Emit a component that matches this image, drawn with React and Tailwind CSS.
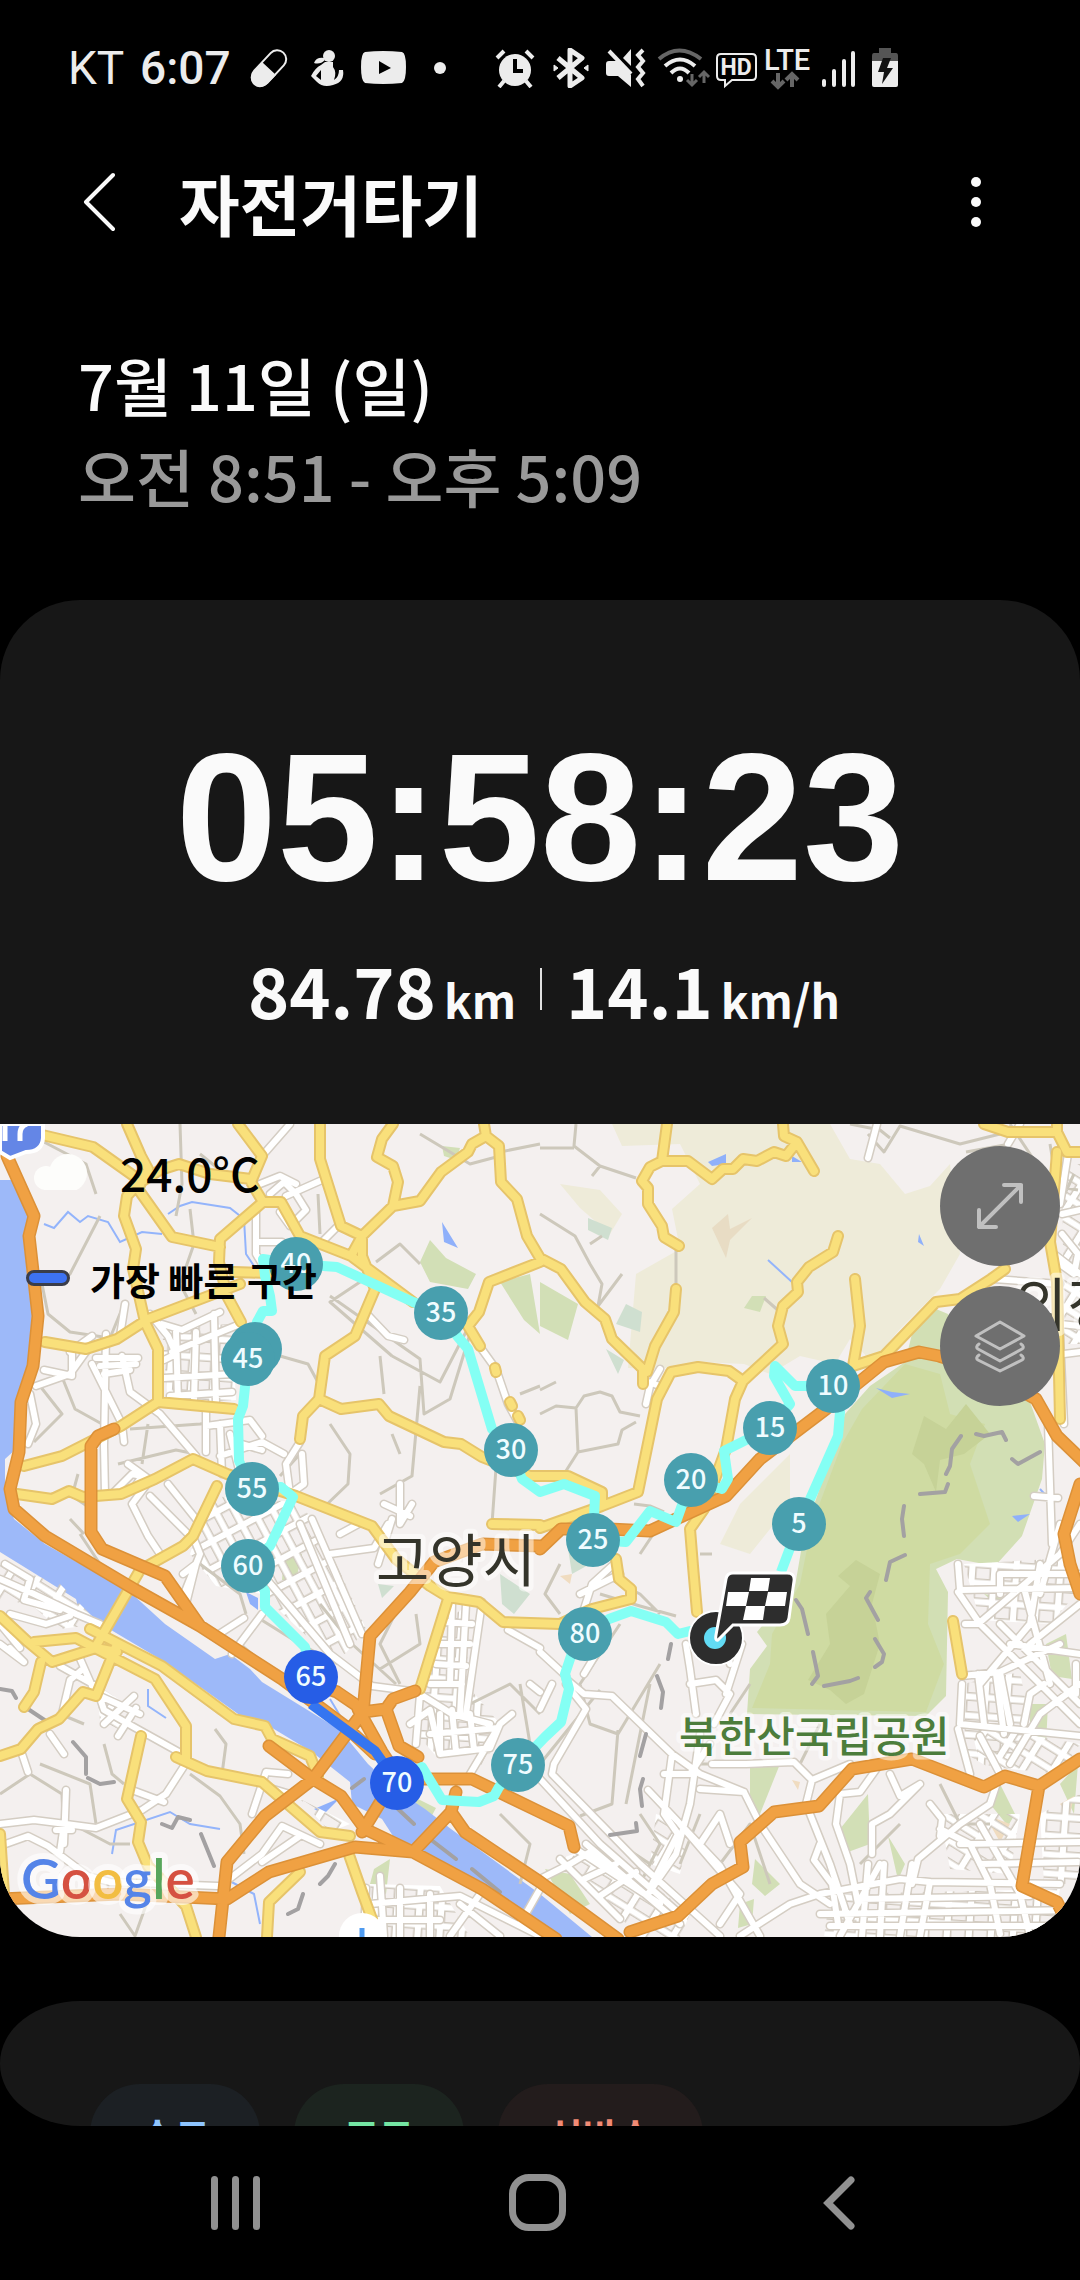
import { useState } from "react";

const LANES = [
  "M44 18L86 40L96 70", "M180 0L182 60L176 92", "M200 30L240 62", "M40 150L48 190L70 208L110 214L124 180",
  "M60 248L75 285L120 310", "M34 318L62 290L40 262", "M100 92L70 150L44 160", "M190 85L194 120L180 160L196 190",
  "M420 10L470 40L500 32", "M500 28L540 20", "M376 138L400 120L420 140", "M392 232L440 258L470 200",
  "M318 70L320 110", "M330 172L420 235L424 290L450 275L470 210", "M372 150L330 178L392 232",
  "M280 232L308 240L320 262", "M330 300L350 330L348 360L322 385", "M420 262L412 352L380 370", "M497 330L492 400",
  "M380 232L384 270", "M392 310L400 330", "M520 270L540 262", "M300 330L280 352", "M130 305L200 300L236 296",
  "M142 340L148 300", "M118 340L176 326L196 330", "M78 350L72 372L90 384", "M576 0L574 22L600 42L636 54",
  "M540 24L574 24", "M600 42L592 52", "M540 90L575 112L590 140L602 160L598 182L622 150", "M590 120L602 112",
  "M676 122L676 165", "M540 290L556 282L576 284L584 272L600 268L612 272L620 288L640 292",
  "M576 284L578 328L618 320L622 306L636 298", "M578 328L564 350", "M540 266L556 258", "M634 380L650 382L664 388",
  "M850 0L880 6L890 14", "M868 10L884 28L900 2L960 20L1000 10", "M966 28L1010 20", "M780 188L764 174",
  "M810 380L836 312", "M560 440L545 470L560 490", "M600 450L640 470L660 490", "M620 500L580 560L590 600L618 610L660 540",
  "M540 640L600 566", "M618 606L612 680L580 692", "M590 690L560 660", "M650 560L626 680",
  "M600 470L640 482L676 492", "M700 430L712 430", "M660 400L640 430",
  "M40 640L90 660L96 700", "M0 670L30 650L62 670L64 720", "M84 600L60 590", "M72 700L110 720L130 720",
  "M104 620L112 650L124 660", "M190 650L220 672L240 700L244 730", "M215 605L226 620L222 650", "M180 560L220 590",
  "M100 440L80 410", "M70 395L84 410", "M200 440L240 470L246 490", "M240 520L264 540", "M320 480L352 520L396 560",
  "M260 495L300 520L338 540", "M400 480L380 520L400 560", "M380 545L420 520L416 490", "M470 580L510 560L540 590",
  "M520 560L530 620", "M500 600L480 640", "M500 690L530 720L520 760", "M120 790L135 812L150 770",
  "M700 640L740 640", "M800 640L820 600", "M750 560L730 590", "M860 740L900 700", "M940 660L960 700L990 700",
  "M640 760L660 720L640 690", "M700 690L680 740", "M720 740L750 700L770 760", "M620 720L650 740",
  "M1050 20L1060 80L1074 50", "M1040 60L1078 66", "M1010 0L1050 60",
];

const STREETS = [
  "M262 32L290 0", "M270 70L284 58L296 70L306 86L290 102L280 88", "M286 72L322 56", "M256 84L256 130L262 140",
  "M256 118L282 118L286 128L320 120L338 102", "M260 60L280 52L296 60", "M367 190L388 212L404 216",
  "M478 220L496 245L508 280L518 298", "M125 180L120 212", "M88 225L70 250L36 262", "M72 226L72 252L44 246",
  "M96 234L138 234M100 242L136 240M104 250L130 246", "M92 240L122 300L124 318", "M122 232L130 268L160 290L196 332",
  "M92 212L70 228", "M106 210L104 322L105 370", "M30 270L36 300L28 320", "M150 190L168 212L176 230L164 236",
  "M162 200L182 206L220 188M172 228L240 200M164 254L234 250M170 272L232 268", "M176 206L178 278M196 208L194 276M214 190L216 280",
  "M206 284L206 328M206 302L250 296L262 312M220 300L222 350M220 332L262 318L284 330", "M112 370L132 350L142 352L134 364",
  "M240 350L230 310M262 326L242 320", "M300 318L286 340L290 370L304 360L302 330",
  "M128 340L150 356L132 380L148 412L160 430", "M150 372L190 412M168 360L200 400", "M183 450L196 440L186 480", "M192 410L200 430L184 470",
  "M216 512L244 494M232 530L262 490", "M240 424L330 530L372 562L418 568", "M300 400L350 520", "M312 395L362 510",
  "M330 430L374 424L388 400M340 410L362 398M392 395L378 440", "M400 360L400 400L412 380M384 380L410 392",
  "M0 455L34 470L76 490L100 500", "M5 440L30 455L24 476L60 486M10 490L46 500L70 492", "M0 520L24 538L10 524M0 500L20 524",
  "M60 542L96 562L104 586L132 602L186 632", "M78 530L92 562M62 590L70 556L84 544", "M100 572L140 590M118 612L136 584M104 600L134 572",
  "M50 610L64 630M22 630L28 648", "M0 700L34 696L66 700L96 704L142 686L166 670L188 636", "M66 666L64 720M56 706L72 706M132 666L164 678",
  "M0 722L28 712L48 722L88 752L110 758L218 762", "M64 700L60 728", "M252 690L266 648L288 650M270 664L290 670",
  "M228 756L262 730L282 702L320 720M262 738L300 712", "M420 570L416 620M420 570L452 590L490 600", "M452 480L450 560M466 480L460 590",
  "M444 498L472 500M440 520L470 520M436 540L466 542M430 560L462 560", "M410 600L430 586L440 630L490 624L500 600L512 590",
  "M440 590L440 628M452 586L456 628M470 590L474 626M430 610L498 604", "M470 650L500 600", "M482 478L466 590", "M508 506L540 524",
  "M530 560L540 568", "M566 555L584 570L612 572L672 630L700 650L744 668L760 700L800 760L830 780",
  "M540 585L552 560M566 560L586 585L554 640L552 650L640 740L720 812", "M540 655L600 720L680 790",
  "M584 550L596 530", "M540 528L566 552", "M686 520L690 545L696 590M690 560L716 556L730 570L714 600M730 540L722 500",
  "M742 520L726 570", "M648 666L720 742L760 812", "M672 630L664 690L678 710L652 760", "M700 610L690 680L676 730L648 770",
  "M712 640L746 640L794 638L812 656L850 640", "M700 665L744 668", "M812 656L806 680L830 740L850 800", "M664 650L690 650L710 620",
  "M880 640L860 668L840 670L836 700L850 740L858 780", "M890 650L900 672L920 660M918 662L890 690L872 700L872 730",
  "M680 700L740 770L720 800M700 720L720 690L730 720", "M820 720L814 736L832 760L838 800",
  "M540 755L570 740L590 728L640 766", "M560 735L620 795M574 724L660 780M586 720L680 800", "M584 755L616 740M600 772L636 748",
  "M740 812L790 780L820 770L900 755L930 758L1060 760", "M840 812L880 740M862 812L868 740M880 812L884 740M900 812L912 740M920 812L930 758",
  "M820 790L1080 786M830 802L1070 802M860 775L1030 772", "M912 760L918 735L960 700L990 680L1000 650",
  "M930 680L942 695L940 712M940 705L970 720L990 760L1000 810", "M980 700L1020 770L1030 812M960 720L1080 718M980 740L1078 738",
  "M958 440L960 466L1080 464M958 468L980 500L1080 600", "M965 500L978 500L1060 430L1080 400",
  "M1000 470L1000 450L1080 450M1024 464L1050 560M1040 440L1030 500L980 560", "M1060 400L1040 470",
  "M962 560L960 600L1080 612M978 550L984 600M996 550L1004 610", "M962 552L1000 548L1060 520M1000 548L1010 600",
  "M958 605L970 650M980 612L1000 650M1010 640L1040 590L1080 560M1024 600L1030 570L1044 560", "M1000 500L1060 560L1080 580",
  "M1030 520L1080 480M1010 520L1080 530", "M1076 540L1076 570", "M1048 300L1052 420M1034 372L1058 374M1058 170L1064 300",
  "M994 155L1060 160M1062 90L1080 86M1054 130L1080 150M1020 0L1008 20M1068 30L1060 80", "M1060 200L1080 202M1064 230L1080 228",
  "M877 0L868 34", "M1062 110L1078 130L1074 150L1060 140", "M614 440L592 460L584 485M580 470L620 450",
  "M660 245L650 262L646 280M648 258L660 262", "M366 764L364 812M380 752L384 812M400 764L400 812M430 770L430 812M370 780L460 772L540 812M374 796L440 796",
  "M540 765L520 800M460 780L500 812M480 770L450 812",
];

const YELLOW = [
  "M38 10L93 23L138 55", "M127 0L141 32L148 45L138 65L172 113L220 123", "M138 60L127 72L124 92L136 125L133 145L145 198L158 225L158 278",
  "M138 60L160 46L179 40L210 50L251 55", "M238 0L262 32L251 58L263 78L220 115L219 138L227 172L241 198",
  "M263 78L281 78L300 112L351 132L362 112", "M320 0L320 35L341 102L362 112L393 82L420 77L441 48L468 28L472 20L486 12L484 0",
  "M486 12L499 22L501 58L517 75L527 112L540 134L561 145L585 178L605 195L612 215L643 245L643 260",
  "M393 0L382 15L377 33L393 42L398 58L393 82", "M351 132L413 178", "M362 115L362 132L375 165L355 212L325 232L319 275L303 292L300 315",
  "M319 275L341 285L379 280L389 292L444 318L461 320L482 333L530 352L568 352L602 368L602 382",
  "M540 138L489 158L479 188L468 202L480 222", "M495 244L496 248M510 278L512 282M518 292L520 296", "M234 148L300 150",
  "M240 160L148 195L117 215L86 225L45 218", "M158 278L121 302L62 332L24 342", "M158 278L234 285",
  "M17 370L52 375L69 367L83 373L121 370L155 355L193 335L227 350L296 372L372 402L396 435L430 462L448 473L479 478L503 498L560 500L592 485L631 475",
  "M217 362L193 412L183 422L140 446L96 522", "M0 492L28 518L52 538L96 524L117 528", "M34 518L76 514L93 523L155 555L186 602L186 635",
  "M90 505L162 542L234 595L265 602L272 615L310 632L318 652", "M41 538L34 568L24 583", "M117 520L96 572L83 568L59 595L38 605L21 625L0 632",
  "M141 612L127 675L141 698L138 718L148 742L186 782L196 813", "M176 633L207 647L262 658L320 708L350 712", "M300 748L269 778L267 813",
  "M348 728L362 768L372 795", "M448 475L420 565", "M492 400L540 401", "M0 710L4 770", "M631 475L631 465L619 455L616 435",
  "M726 325L704 385L690 405L693 442L697 488", "M667 0L662 37L688 37L712 55L723 45L733 45L743 35L757 37L774 28L786 32L797 18L784 12L783 0",
  "M797 18L814 47", "M662 37L650 43L642 57L648 64L648 80L662 102L664 113L679 122", "M676 165L674 188L655 222L647 248",
  "M838 112L833 128L809 143L797 158L798 168L783 182L778 202L783 220L743 257L729 247L698 243L671 248L657 275L638 368L602 382L540 404",
  "M743 257L735 275L726 325", "M855 155L860 202L853 242L884 232L936 178L960 175L991 155L1005 145",
  "M984 0L1008 8L1057 8L1067 28L1080 28", "M1057 28L1050 118L1057 158L1060 295", "M953 497L962 550", "M1057 0L1057 8",
];

const ORANGE = [
  "M7 32L34 92L29 112L38 192L33 242L21 278L19 328L10 365L14 385L45 412L134 465L200 502L282 555L345 602L375 630",
  "M320 562L337 568L362 585", "M114 305L98 312L91 322L91 408L102 425L165 452L200 502",
  "M540 422L482 420L434 438L410 468L370 512L363 588", "M540 425L561 405L609 405L650 407L726 372L760 335L826 285L884 238L919 228L939 232L981 245L1036 275L1057 312L1084 338",
  "M1080 360L1064 410L1070 440L1080 470", "M363 588L313 655L265 692L227 738L219 813", "M269 622L313 655L341 672L365 705L413 728L482 765L556 815",
  "M0 775L120 770L227 775L269 748L355 723L413 728", "M362 708L384 672", "M413 728L451 688L456 668", "M451 688L465 708L540 758L618 815",
  "M363 588L386 585L393 575L415 567", "M386 585L399 622L418 633", "M358 585L382 628L400 655L472 655L540 688L569 702L574 723",
  "M630 808L678 792L712 760L743 743L740 718L774 688L819 682L852 645L912 635L984 663L1005 652L1039 662L1080 635",
  "M1039 662L1022 762L1057 778L1064 792",
];

const ROUTE =
  "M716 512L690 507L678 510L666 498L631 487L609 495L585 510L571 532L565 550L569 565L561 598L545 613L518 641L499 663L494 672L479 678L442 676L422 643L397 659M311 553L305 523L265 483L265 467L248 442L270 422L293 373L281 363L252 365L239 337L238 295L243 282L248 235L257 198L263 187L272 187L270 172L265 152L263 135L296 140L337 143L413 178L441 189L458 213L468 225L492 305L511 326L522 355L540 368L564 360L595 372L593 416L626 418L650 387L676 398L691 356L722 365L728 355L724 327L770 304L790 280L774 252L775 242L795 262L833 262L840 288L838 312L799 400L781 448";

const MARKERS = [
  { km: 80, x: 585, y: 510 },
  { km: 75, x: 518, y: 641 },
  { km: 70, x: 397, y: 659, fast: true },
  { km: 65, x: 311, y: 553, fast: true },
  { km: 60, x: 248, y: 442 },
  { km: 55, x: 252, y: 365 },
  { km: null, x: 255, y: 225 },
  { km: 45, x: 248, y: 235 },
  { km: 40, x: 296, y: 140 },
  { km: 35, x: 441, y: 189 },
  { km: 30, x: 511, y: 326 },
  { km: 25, x: 593, y: 416 },
  { km: 20, x: 691, y: 356 },
  { km: 15, x: 770, y: 304 },
  { km: 10, x: 833, y: 262 },
  { km: 5, x: 799, y: 400 },
];

const CHIPS = [
  { label: "속도", className: "bg-[#1c2024] text-[#8ec5ff]" },
  { label: "고도", className: "bg-[#1c241f] text-[#74e5a3]" },
  { label: "심박수", className: "bg-[#231c1c] text-[#f28b75]" },
];

// Outline first, then the road itself, so junctions stay open
function Roads({ paths, casing, color, width, border }) {
  const d = paths.join("");
  return (
    <g fill="none" strokeLinecap="round" strokeLinejoin="round">
      <path d={d} stroke={casing} strokeWidth={width + border} />
      <path d={d} stroke={color} strokeWidth={width} />
    </g>
  );
}

function StreetPattern({ id, angle, w, h }) {
  const d = `M0 ${h / 2}H${w}M${w / 2} 0V${h}`;
  return (
    <pattern id={id} width={w} height={h} patternUnits="userSpaceOnUse" patternTransform={`rotate(${angle})`}>
      <path d={d} stroke="#cfc8bd" strokeWidth="9" fill="none" />
      <path d={d} stroke="#ffffff" strokeWidth="6" fill="none" />
    </pattern>
  );
}

function RouteMap() {
  return (
    <svg viewBox="0 0 1080 813" className="block h-auto w-full" role="img" aria-label="이동 경로 지도">
      <defs>
        <StreetPattern id="grid-a" angle={62} w={24} h={17} />
        <StreetPattern id="grid-b" angle={4} w={22} h={19} />
        <StreetPattern id="grid-c" angle={32} w={26} h={19} />
      </defs>
      <rect width="1080" height="813" fill="#f4f0ef" />

      {/* Hills and parks */}
      <path fill="#eeebd9" d="M612 0H830L850 35L880 40L905 70L930 62L950 40L960 130L940 165L900 205L872 238L850 215L835 240L800 232L770 250L744 240L700 238L660 245L628 244L636 150L680 125L672 85L700 60L680 20L622 22ZM560 60L600 66L622 90L610 110L580 84ZM790 330L740 380L720 420L750 430L790 380Z" />
      <path fill="#e8dcc4" d="M712 104L728 90L730 105L752 94L730 116L726 134Z" />
      <path fill="#cfdfd0" d="M588 94L612 104L608 116L588 106ZM626 180L642 188L640 208L616 200ZM606 225L624 236L618 250ZM500 450L530 470L514 490L502 480ZM566 412L590 440L572 450ZM378 460L394 462L382 474Z" />
      <path fill="#d2dfb6" d="M540 158L578 180L568 216L540 202ZM430 116L446 134L476 150L468 165L430 158L420 138ZM500 158L530 150L540 210L524 196ZM442 22L460 24L456 36L444 32ZM752 172L766 172L760 188L744 184ZM284 430L302 430L296 456L282 456ZM338 496L346 502L342 512L334 506ZM416 674L436 684L430 695L416 690ZM374 745L390 735L386 770L370 760ZM750 642L780 640L760 690L750 680ZM755 735L780 760L765 772L752 760ZM868 670L870 720L848 728L840 705ZM888 712L905 740L898 756ZM1000 660L1015 690L1008 702L990 680ZM1046 520L1066 510L1072 555L1052 552ZM1030 580L1048 580L1046 620L1030 610ZM1060 660L1078 640L1074 690ZM545 745L570 750L590 780L570 790ZM740 780L754 775L752 800L738 804ZM984 470L1008 474L1000 484Z" />
      <path fill="#f0dcc0" d="M984 690L1010 700L1000 718ZM560 452L572 450L570 460ZM792 656L800 658L798 666ZM1060 680L1074 672L1070 690Z" />
      <path fill="#d2dfb4" d="M936 185L948 190L985 248L1030 278L1045 320L1042 355L1022 412L995 442L957 435L936 445L948 468L946 572L926 592L747 590L750 545L767 522L757 508L795 462L804 410L835 320L845 290L870 262L905 238L912 210Z" />
      <path fill="#cfdba2" d="M905 240L940 250L950 290L985 300L970 340L990 400L960 430L930 440L928 500L944 540L926 588L752 584L770 540L772 510L800 460L812 400L842 320L862 285Z" />
      <path fill="#c6d297" d="M924 292L946 305L966 280L990 310L964 330L940 336L936 368L924 340L912 330ZM856 436L880 450L872 480L880 520L864 570L846 580L830 566L808 556L830 520L826 490L850 462L838 452Z" />

      {/* Water */}
      <path fill="#9db9f9" d="M0 56L16 56L31 100L24 120L32 190L30 240L16 290L16 325L5 335L5 370L14 395L45 420L130 468L165 500L215 535L230 530L250 545L262 558L340 606L368 640L395 665L425 685L451 705L540 770L592 813H554L520 788L427 730L393 712L382 695L352 680L350 658L312 628L269 602L241 592L165 538L79 487L76 475L0 428Z" />
      <path fill="#8fb0fa" d="M442 98L458 124L444 118ZM708 38L726 30L726 40L712 42ZM792 32L802 38L792 38ZM876 264L892 268L910 270L892 274ZM919 110L924 122L918 118ZM246 468L258 474L258 486L250 480ZM1012 392L1030 390L1018 398ZM314 685L340 674L324 690Z" />
      <path fill="none" stroke="#93b4fb" strokeWidth="2" d="M44 100L54 104L68 88L80 98L88 92L108 98L120 118L142 108L162 110M168 90L180 82L192 78L230 84L244 95L246 130L254 142M148 565L148 582L166 594M112 730L116 706L170 688L190 700L220 705M226 755L254 770L260 800M768 136L792 158M1040 365L1048 374M270 736L290 715M330 575L342 595" />

      {/* Built-up blocks */}
      <path fill="url(#grid-a)" d="M210 372L296 378L318 400L366 505L345 530L315 520L262 470L216 462L190 430Z" />
      <path fill="url(#grid-b)" d="M162 204L232 200L236 276L168 280ZM440 500L470 480L466 560L500 600L490 630L436 632L408 600L426 570ZM370 760L440 762L470 813H376Z" />
      <path fill="url(#grid-b)" d="M830 770L1060 765L1050 813H824ZM964 440L1068 434L1076 470L1050 500L980 496ZM962 560L1020 548L1030 600L1000 650L966 630ZM1040 690L1080 670V760H1044Z" />
      <path fill="url(#grid-c)" d="M560 735L600 720L690 790L680 813H640ZM0 440L60 460L100 500L60 505L30 480L0 476ZM96 560L140 590L120 606L100 596ZM970 600L1080 620L1060 650L1010 645L980 640ZM940 690L1020 690L1010 750L950 745Z" />
      <path fill="url(#grid-c)" d="M656 690L690 700L680 750L650 740ZM300 675L350 700L330 708ZM1062 40L1080 40V220H1064Z" />

      <path d={LANES.join("")} fill="none" stroke="#cdc8bb" strokeWidth="3" strokeLinejoin="round" />
      <Roads paths={STREETS} casing="#d4cdc3" color="#ffffff" width={6} border={3} />
      <path
        fill="none"
        stroke="#a3a1a2"
        strokeWidth="4"
        strokeLinecap="round"
        strokeLinejoin="round"
        d="M961 312L952 325L950 342L946 350M976 310L984 312L1002 308L1006 316M1012 335L1018 340L1040 328M920 370L945 368L948 360M904 382L902 395L904 412M905 431L890 438L886 456M870 468L866 474L878 496M875 515L884 530L882 538L875 543M796 476L802 485L808 510M813 528L818 552L812 560M824 562L850 557L858 554M671 520L668 535M657 552L663 568L661 584M646 610L640 632M643 655L640 665L642 682M610 711L637 707L636 699M0 565L12 567L16 574M28 585L46 597M73 618L86 633L86 650M88 654L100 660L114 658M162 700L172 704L178 693L190 696M201 710L214 742M303 770L298 785L288 790M335 740L328 752L320 760M352 664L364 655M398 685L414 700M430 715L456 735M472 745L500 768"
      />
      <Roads paths={YELLOW} casing="#e6c46a" color="#f9e07b" width={8} border={4} />
      <Roads paths={ORANGE} casing="#dc9138" color="#f0a143" width={10} border={3} />

      {/* Road badge cut off by the corner */}
      <path d="M0 0H43V14Q42 28 26 28L10 34L0 28Z" fill="#6486e6" stroke="#ffffff" strokeWidth="4" />
      <path d="M5 0V17M20 17V10Q20 2 27 0" fill="none" stroke="#ffffff" strokeWidth="5" />
      <circle cx="362" cy="812" r="23" fill="#ffffff" />
      <path d="M362 804V813" stroke="#4f9bf0" strokeWidth="5" />

      {/* Place names */}
      <g fontFamily="'Noto Sans CJK KR', sans-serif" paintOrder="stroke" strokeLinejoin="round" stroke="#ffffff" strokeOpacity="0.5">
        <text x="376" y="458" fontSize="58" fill="#34342a" strokeWidth="10">고양시</text>
        <text x="1014" y="202" fontSize="58" fill="#34342a" strokeWidth="10">의정</text>
        <text x="679" y="628" fontSize="42" fontWeight="500" fill="#4c7d3c" strokeWidth="9">북한산국립공원</text>
      </g>

      {/* Ridden track */}
      <g fill="none" strokeLinejoin="round">
        <path d={ROUTE} stroke="#84fff4" strokeWidth="10" />
        <path d="M311 580L375 627L384 640" stroke="#3575f0" strokeWidth="10" />
      </g>
      {MARKERS.map((m) => (
        <g key={`${m.x}-${m.y}`}>
          <circle cx={m.x} cy={m.y} r="27" fill={m.fast ? "#265de6" : "#489fae"} />
          {m.km && (
            <text x={m.x} y={m.y + 9} textAnchor="middle" fontSize="27" fontWeight="500" fontFamily="'Noto Sans CJK KR', sans-serif" fill="#effcff">
              {m.km}
            </text>
          )}
        </g>
      ))}

      {/* Finish flag */}
      <circle cx="716" cy="514" r="27" fill="#2d2d2d" stroke="#ffffff" strokeWidth="2" />
      <circle cx="715" cy="514" r="11" fill="#62dcf5" />
      <path d="M733 449H787Q795 449 794 457L789 494Q788 501 780 501H733L718 516Q715 517 716 511L726 455Q727 449 733 449Z" fill="#2d2d2d" stroke="#ffffff" strokeWidth="3" />
      <path d="M751 454H770L768 467H749ZM728 468H749L746 482H726ZM768 468H787L785 482H765ZM746 482H765L763 496H743Z" fill="#ffffff" />

      <text x="21" y="775" fontSize="55" fontWeight="600" fontFamily="Lato, sans-serif" paintOrder="stroke" stroke="#ffffff" strokeOpacity="0.6" strokeWidth="12" strokeLinejoin="round">
        <tspan fill="#5584e8">G</tspan>
        <tspan fill="#d55141">o</tspan>
        <tspan fill="#f2bd42">o</tspan>
        <tspan fill="#5584e8">g</tspan>
        <tspan fill="#58a65c">l</tspan>
        <tspan fill="#d55141">e</tspan>
      </text>
    </svg>
  );
}

function StatusBar() {
  return (
    <div className="flex h-10 items-center gap-[49px] pl-[68px] text-[#ececec]">
      <div className="flex items-center gap-4">
        <span className="w-14 font-[Roboto] text-[46px] leading-10">KT</span>
        <span className="w-[94px] font-[Roboto] text-[46px] leading-10 font-medium">6:07</span>
        <svg width="45" height="40" viewBox="0 0 45 40" fill="none">
          <rect x="10" y="-1" width="18" height="42" rx="9" transform="rotate(43 19 20)" stroke="currentColor" strokeWidth="2" />
          <path d="M12 14L26 27L16 37Q9 42 3 36Q-2 29 4 23Z" fill="currentColor" />
        </svg>
        <svg width="34" height="40" viewBox="0 0 34 40" fill="currentColor">
          <circle cx="18" cy="8" r="6" />
          <path d="M13 10Q5 9 3 15Q9 17 14 12Z" />
          <path d="M14 14H22V19Q26 24 23 32Q28 29 28 22H32Q34 34 22 37Q12 40 6 34L0 28Q4 20 10 17ZM10 22L5 28L10 32Z" fillRule="evenodd" />
        </svg>
        <svg width="57" height="40" viewBox="0 0 57 40">
          <path d="M4 4Q22 2 41 4Q45 5 45 19Q45 33 41 35Q22 37 4 35Q0 33 0 19Q0 5 4 4Z" fill="currentColor" />
          <path d="M18 13L30 20L18 26Z" fill="#000000" />
        </svg>
        <span className="size-3 rounded-full bg-[#ececec]" />
      </div>

      <div className="flex items-center gap-2">
        <svg width="50" height="40" viewBox="0 0 50 40" fill="none" stroke="currentColor">
          <circle cx="20" cy="22" r="16" fill="currentColor" stroke="none" />
          <path d="M2 10L9 3M31 3L38 10M9 33L4 39M31 33L36 39" strokeWidth="4" />
          <path d="M20 11V23H28" stroke="#000000" strokeWidth="4" />
        </svg>
        <svg width="45" height="40" viewBox="0 0 45 40" fill="none" stroke="currentColor" strokeWidth="5">
          <path d="M5 10L29 30L17 38V2L29 10L5 30" strokeLinejoin="round" />
          <path d="M1 17L5 20L1 23ZM35 17L31 20L35 23Z" fill="currentColor" strokeWidth="1" />
        </svg>
        <svg width="44" height="40" viewBox="0 0 44 40" fill="currentColor">
          <path d="M0 16Q0 13 3 13H11L25 27V39L12 28H3Q0 28 0 25Z" />
          <path d="M17 10L25 1V18Z" />
          <path d="M3 3L25 26" stroke="currentColor" strokeWidth="4" />
          <path d="M37 2L32 7L37 13L32 19L37 25L32 31L37 38" fill="none" stroke="currentColor" strokeWidth="4" />
        </svg>
        <svg width="50" height="40" viewBox="0 0 50 40" fill="none" stroke="currentColor" strokeWidth="4" className="overflow-visible">
          <path d="M1 11Q21 -6 43 11" stroke="#666666" />
          <path d="M7 18Q22 5 37 18M13 25Q22 16 31 25" />
          <circle cx="22" cy="31" r="3" fill="currentColor" stroke="none" />
          <path d="M34 26V36M29 32L34 37L39 32M46 35V24M41 29L46 24L51 29" stroke="#666666" strokeWidth="3" />
        </svg>
        <svg width="40" height="40" viewBox="0 0 40 40" className="overflow-visible">
          <path d="M5 6H36Q40 6 40 10V28Q40 32 36 32H16L9 38V32H5Q1 32 1 28V10Q1 6 5 6Z" fill="none" stroke="currentColor" strokeWidth="2" />
          <text x="20" y="27" textAnchor="middle" fontSize="23" fontWeight="700" fontFamily="Roboto, sans-serif" fill="currentColor">HD</text>
        </svg>
        <svg width="50" height="40" viewBox="0 0 50 40" className="overflow-visible">
          <text x="0" y="22" fontSize="29" fontWeight="500" fontFamily="Roboto, sans-serif" fill="currentColor">LTE</text>
          <path d="M14 25V38M8 33L14 39L20 33M28 39V26M22 32L28 26L34 32" fill="none" stroke="#666666" strokeWidth="4" />
        </svg>
        <svg width="42" height="40" viewBox="0 0 42 40" stroke="currentColor" strokeWidth="4" strokeLinecap="round">
          <path d="M2 33V37M12 23V37M22 13V37M31 5V37" />
        </svg>
        <svg width="26" height="40" viewBox="0 0 26 40">
          <path d="M7 0H19V5H24Q26 5 26 8V13H0V8Q0 5 2 5H7Z" fill="#555555" />
          <path d="M0 13H26V37Q26 39 24 39H2Q0 39 0 37Z" fill="currentColor" />
          <path d="M11 10H19L15 20H21L10 36L12 24H6Z" fill="#111111" />
        </svg>
      </div>
    </div>
  );
}

function Stat({ value, unit }) {
  return (
    <p className="flex items-baseline gap-2">
      <span className="text-[70px] leading-20">{value}</span>
      <span className="text-[46px] leading-none">{unit}</span>
    </p>
  );
}

function NavBar() {
  return (
    <nav className="grid h-[153px] grid-cols-3 items-center pr-[90px] pl-[84px] text-[#919191]">
      <button type="button" aria-label="최근 앱" className="flex justify-center gap-3.5">
        <span className="h-[54px] w-[7px] rounded-full bg-current" />
        <span className="h-[54px] w-[7px] rounded-full bg-current" />
        <span className="h-[54px] w-[7px] rounded-full bg-current" />
      </button>
      <button type="button" aria-label="홈" className="flex justify-center">
        <span className="size-[57px] rounded-[20px] border-7 border-current" />
      </button>
      <button type="button" aria-label="뒤로" className="flex justify-center">
        <svg width="32" height="54" viewBox="0 0 32 54" fill="none" stroke="currentColor" strokeWidth="7" strokeLinecap="round">
          <path d="M28 4L5 27L28 50" />
        </svg>
      </button>
    </nav>
  );
}

export default function App() {
  const [expanded, setExpanded] = useState(false);

  return (
    <div className="min-h-screen bg-black pt-12 font-['Noto_Sans_CJK_KR',sans-serif] text-[#fafafa]">
      <StatusBar />

      <header className="mt-16 flex h-[100px] items-center pr-[88px] pl-[83px]">
        <button type="button" aria-label="뒤로 가기" className="w-8">
          <svg width="32" height="60" viewBox="0 0 32 60" fill="none" stroke="currentColor" strokeWidth="4" strokeLinecap="round" strokeLinejoin="round">
            <path d="M30 3L3 30L30 57" />
          </svg>
        </button>
        <h1 className="ml-16 flex-1 text-[66px] leading-[98px] font-bold">자전거타기</h1>
        <button type="button" aria-label="메뉴" className="flex w-8 flex-col items-center gap-2.5">
          <span className="size-2.5 rounded-full bg-current" />
          <span className="size-2.5 rounded-full bg-current" />
          <span className="size-2.5 rounded-full bg-current" />
        </button>
      </header>

      <div className="mt-[86px] px-[78px] text-[63px] leading-[91px] font-medium">
        <p>7월 11일 (일)</p>
        <p className="text-[#999999]">오전 8:51 - 오후 5:09</p>
      </div>

      <main className="mt-20">
        <section className="overflow-hidden rounded-[80px] bg-[#171717]">
          <div className="pt-[145px] pb-[95px] text-center">
            <p className="font-['Liberation_Sans'] text-[182px] leading-[144px] font-bold">05:58:23</p>
            <div className="mt-15 flex items-center justify-center pl-2 font-bold">
              <Stat value="84.78" unit="km" />
              <span className="mx-6 h-[42px] w-0.5 bg-[#e0e0e0]" />
              <Stat value="14.1" unit="km/h" />
            </div>
          </div>

          <div className="relative">
            <RouteMap />

            {/* Weather and legend */}
            <div className="absolute inset-x-0 top-[18px] flex flex-col gap-[46px] text-black">
              <div className="flex h-[60px] items-center gap-8 pl-[34px]">
                <svg width="54" height="36" viewBox="0 0 54 36" fill="#fdfdfb">
                  <circle cx="34" cy="19" r="19" />
                  <circle cx="12" cy="24" r="12" />
                  <rect x="10" y="16" width="28" height="20" />
                </svg>
                <span className="text-[46px] font-medium">24.0°C</span>
              </div>
              <div className="flex h-[60px] items-center gap-5 pl-[26px]">
                <span className="h-4 w-11 rounded-full border-3 border-[#3a3d4a] bg-[#3d72f2]" />
                <span className="text-[38px] font-bold">가장 빠른 구간</span>
              </div>
            </div>

            <div className="absolute top-[22px] right-5 flex flex-col gap-5">
              <button
                type="button"
                aria-label="지도 확대"
                aria-pressed={expanded}
                onClick={() => setExpanded(!expanded)}
                className="flex size-30 items-center justify-center rounded-full bg-[#6f6f6f] text-[#c0c0c0]"
              >
                <svg width="48" height="48" viewBox="0 0 48 48" fill="none" stroke="currentColor" strokeWidth="4" strokeLinecap="round" strokeLinejoin="round">
                  <path d="M3 45L45 3M28 3H45V20M3 28V45H20" />
                </svg>
              </button>
              <button type="button" aria-label="지도 유형" className="flex size-30 items-center justify-center rounded-full bg-[#6f6f6f] text-[#c0c0c0]">
                <svg width="52" height="54" viewBox="0 0 52 54" fill="none" stroke="currentColor" strokeWidth="3" strokeLinecap="round" strokeLinejoin="round">
                  <path d="M26 3L50 17L26 30L2 17ZM5 25Q1 28 4 30L26 42L48 30Q51 28 47 25M5 36Q1 39 4 41L26 52L48 41Q51 39 47 36" />
                </svg>
              </button>
            </div>
          </div>
        </section>

        <section className="mt-16 flex h-[125px] items-start gap-[34px] overflow-hidden rounded-[80px_/_62px] bg-[#171717] px-[90px] pt-[83px]">
          {CHIPS.map((chip) => (
            <button key={chip.label} type="button" className={`h-[100px] shrink-0 rounded-full px-[50px] text-[38px] font-bold ${chip.className}`}>
              {chip.label}
            </button>
          ))}
        </section>
      </main>

      <NavBar />
    </div>
  );
}
